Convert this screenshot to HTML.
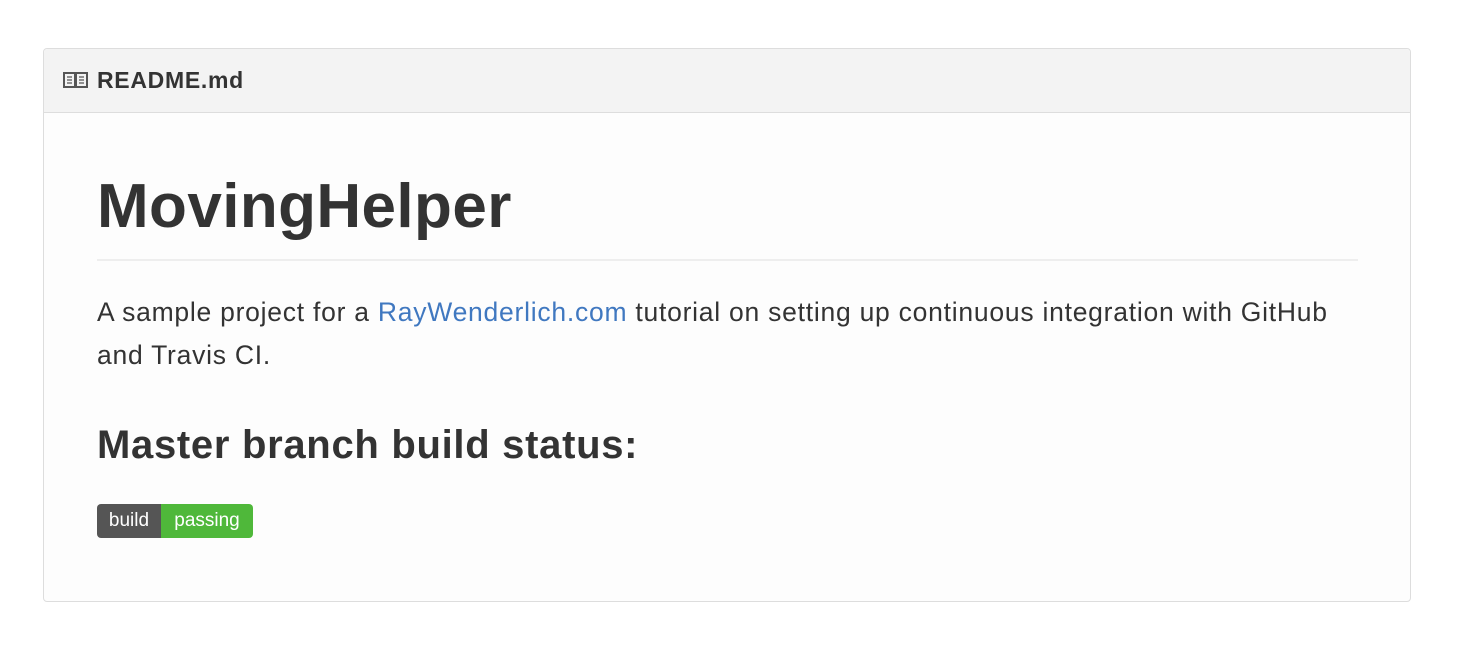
<!DOCTYPE html>
<html><head><style>
body{margin:0;background:#fff;font-family:"Liberation Sans",Arial,sans-serif;width:1470px;height:668px;position:relative;overflow:hidden}
.box{position:absolute;left:43px;top:48px;width:1366px;height:552px;border:1px solid #ddd;border-radius:4px;background:#fdfdfd}
.hd{height:63px;background:#f3f3f3;border-bottom:1px solid #ddd;border-radius:4px 4px 0 0;position:relative}
.hd span{position:absolute;left:53px;top:18px;font-weight:bold;font-size:23px;letter-spacing:0.7px;color:#333}
.hd svg{position:absolute;left:19px;top:23px}
h1{position:absolute;left:53px;top:122px;margin:0;font-size:62px;color:#333;font-weight:bold;letter-spacing:0.4px}
.sep{position:absolute;left:53px;top:210px;width:1261px;height:2px;background:#eee}
p{position:absolute;left:53px;top:242px;margin:0;font-size:26.5px;letter-spacing:0.75px;line-height:43px;color:#333;width:1320px}
a{color:#4078c0;text-decoration:none}
h2{position:absolute;left:53px;top:374px;margin:0;font-size:40px;letter-spacing:0.7px;color:#333;font-weight:bold}
.badge{position:absolute;left:53px;top:455px;height:34px;display:flex;border-radius:4px;overflow:hidden;font-size:19px;color:#fff}
.b1{background:#555;width:64px;display:flex;align-items:center;justify-content:center}
.b2{background:#4fb83a;width:92px;display:flex;align-items:center;justify-content:center}
</style></head><body>
<div class="box">
<div class="hd"><svg width="26" height="16" viewBox="0 0 26 16"><rect x="1" y="1" width="11" height="14" fill="none" stroke="#555" stroke-width="2"/><rect x="13" y="1" width="11" height="14" fill="none" stroke="#555" stroke-width="2"/><path d="M4 5h5M4 8h5M4 11h5M16 5h5M16 8h5M16 11h5" stroke="#555" stroke-width="1.3"/></svg><span>README.md</span></div>
<h1>MovingHelper</h1>
<div class="sep"></div>
<p>A sample project for a <a>RayWenderlich.com</a> tutorial on setting up continuous integration with GitHub<br>and Travis CI.</p>
<h2>Master branch build status:</h2>
<div class="badge"><div class="b1">build</div><div class="b2">passing</div></div>
</div>
</body></html>
